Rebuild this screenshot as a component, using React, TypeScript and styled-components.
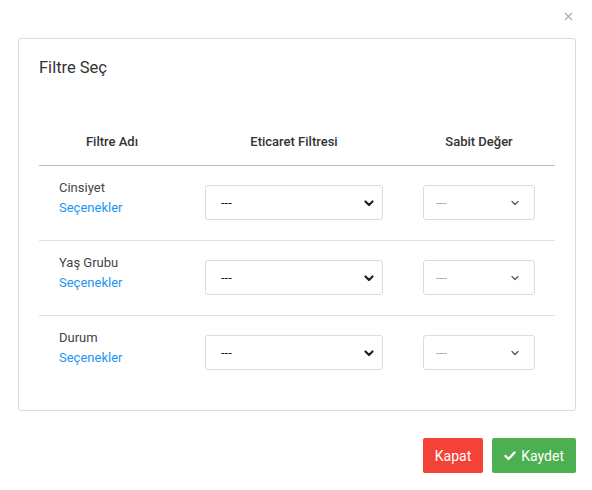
import styled, { createGlobalStyle } from "styled-components";

const GlobalStyle = createGlobalStyle`
  html, body {
    margin: 0;
    padding: 0;
    background: #fff;
    font-family: Roboto, "Liberation Sans", Arial, sans-serif;
    color: #333;
  }
  * { box-sizing: border-box; }
`;

const Modal = styled.div`
  width: 592px;
  padding: 0 16px 18px 18px;
`;

const TopBar = styled.div`
  display: flex;
  justify-content: flex-end;
  height: 38px;
  padding: 9px 1px 0 0;
`;

const Close = styled.button`
  border: none;
  background: none;
  padding: 0;
  width: 14px;
  height: 14px;
  display: flex;
  align-items: center;
  justify-content: center;
  cursor: pointer;
`;

const Panel = styled.section`
  border: 1px solid #dcdcdc;
  border-radius: 3px;
  padding: 19px 20px 19px 20px;
`;

const Title = styled.h2`
  margin: 0;
  font-size: 16.5px;
  font-weight: 400;
  line-height: 20px;
  color: #333;
`;

const Table = styled.div`
  margin-top: 55px;
  display: grid;
  grid-template-columns: 146px 218px 1fr;
`;

const HeadCell = styled.div`
  text-align: center;
  font-size: 13px;
  font-weight: 500;
  color: #333;
  line-height: 18px;
  padding-bottom: 14px;
  border-bottom: 1px solid #bdbdbd;
`;

const Cell = styled.div<{ $last?: boolean }>`
  padding: 19px 20px 20px 20px;
  height: 75px;
  border-bottom: ${(p) => (p.$last ? "none" : "1px solid #e0e0e0")};
`;

const NameCell = styled(Cell)`
  padding-top: 12px;
  font-size: 13px;
  line-height: 20px;
  color: #444;
`;

const LinkText = styled.a`
  display: block;
  color: #2196f3;
  text-decoration: none;
  cursor: pointer;
`;

const SelectBox = styled.div<{ $muted?: boolean }>`
  height: 35px;
  border: 1px solid #dcdcdc;
  border-radius: 3px;
  display: flex;
  align-items: center;
  justify-content: space-between;
  padding: ${(p) => (p.$muted ? "0 14px 0 12px" : "0 7px 0 15px")};
  font-size: 13px;
  color: ${(p) => (p.$muted ? "#aaa" : "#222")};
  background: #fff;
`;

const Footer = styled.div`
  display: flex;
  justify-content: flex-end;
  gap: 9px;
  margin-top: 27px;
`;

const Button = styled.button<{ $color: string }>`
  height: 35px;
  border: none;
  border-radius: 2px;
  background: ${(p) => p.$color};
  color: #fff;
  font-family: inherit;
  font-size: 14px;
  font-weight: 400;
  padding: 0 12px;
  display: flex;
  align-items: center;
  gap: 5px;
  cursor: pointer;
`;

const BoldChevron = () => (
  <svg width="12" height="12" viewBox="0 0 12 12">
    <path d="M2.5 4.5 L6 8 L9.5 4.5" fill="none" stroke="#222" strokeWidth="2.2" strokeLinecap="round" strokeLinejoin="round" />
  </svg>
);

const ThinChevron = () => (
  <svg width="10" height="10" viewBox="0 0 10 10">
    <path d="M2 3.5 L5 6.5 L8 3.5" fill="none" stroke="#555" strokeWidth="1.2" strokeLinecap="round" strokeLinejoin="round" />
  </svg>
);

const Check = () => (
  <svg width="12" height="11" viewBox="0 0 12 11">
    <path d="M1.5 6 L4.5 9 L10.5 2.5" fill="none" stroke="#fff" strokeWidth="2.4" strokeLinecap="round" strokeLinejoin="round" />
  </svg>
);

const rows = ["Cinsiyet", "Yaş Grubu", "Durum"];

export default function App() {
  return (
    <>
      <GlobalStyle />
      <Modal>
        <TopBar>
          <Close aria-label="close">
            <svg width="9" height="9" viewBox="0 0 9 9">
              <path d="M1 1 L8 8 M8 1 L1 8" stroke="#aaa" strokeWidth="1.1" />
            </svg>
          </Close>
        </TopBar>
        <Panel>
          <Title>Filtre Seç</Title>
          <Table>
            <HeadCell>Filtre Adı</HeadCell>
            <HeadCell>Eticaret Filtresi</HeadCell>
            <HeadCell>Sabit Değer</HeadCell>
            {rows.map((name, i) => {
              const last = i === rows.length - 1;
              return [
                <NameCell key={name + "n"} $last={last}>
                  {name}
                  <LinkText>Seçenekler</LinkText>
                </NameCell>,
                <Cell key={name + "e"} $last={last}>
                  <SelectBox>
                    <span>---</span>
                    <BoldChevron />
                  </SelectBox>
                </Cell>,
                <Cell key={name + "s"} $last={last}>
                  <SelectBox $muted>
                    <span>---</span>
                    <ThinChevron />
                  </SelectBox>
                </Cell>,
              ];
            })}
          </Table>
        </Panel>
        <Footer>
          <Button $color="#f44336">Kapat</Button>
          <Button $color="#4caf50">
            <Check />
            Kaydet
          </Button>
        </Footer>
      </Modal>
    </>
  );
}
